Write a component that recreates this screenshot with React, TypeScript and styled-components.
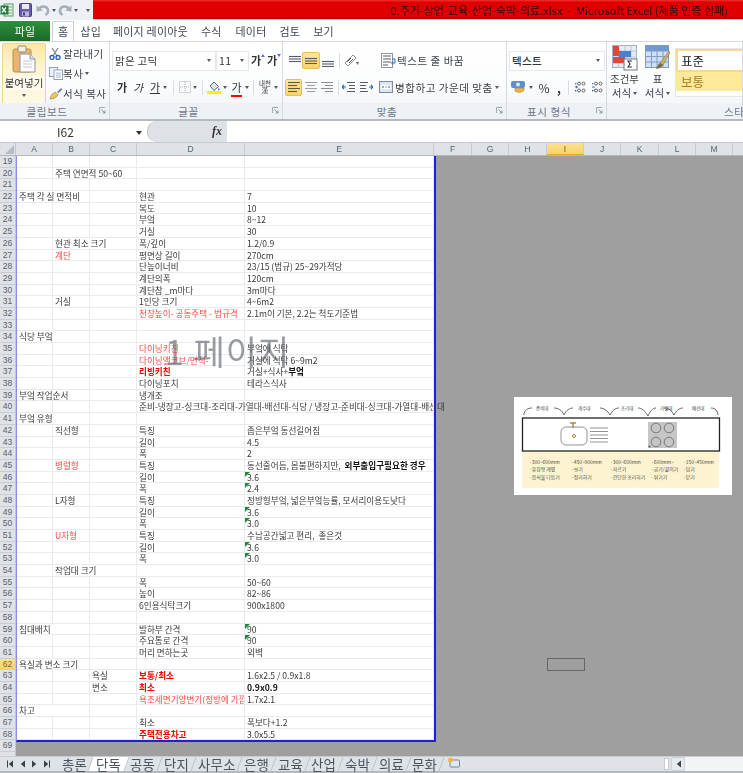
import React from "react";
import styled, { createGlobalStyle } from "styled-components";

const Global = createGlobalStyle`
  html, body { margin: 0; padding: 0; background: #fff; }
  * { box-sizing: border-box; }
  svg { display: block; flex: none; }
`;

const KR = `"Noto Sans CJK KR", "Noto Sans", sans-serif`;

const Screen = styled.div`
  width: 743px; height: 773px; overflow: hidden; display: flex; flex-direction: column;
  font-family: ${KR}; color: #3c4350; position: relative; filter: blur(0.4px);
`;

/* ---------- title bar ---------- */
const TitleBar = styled.div`display: flex; height: 20px; background: #edf0f5;`;
const Qat = styled.div`width: 93px; display: flex; align-items: center;`;
const QatGap = styled.span<{ $w: number }>`width: ${p => p.$w}px; flex: none;`;
const TitleStrip = styled.div`
  flex: 1; height: 20px; display: flex; justify-content: flex-end; align-items: center; padding-right: 15px;
  background: linear-gradient(#f03030 0, #e00000 12%, #de0000 85%, #b80000 100%);
  font-size: 11px; color: #2c0303; white-space: pre; border-bottom: 1px solid #c9ced6;
`;

/* ---------- tabs ---------- */
const TabRow = styled.div`height: 21px; display: flex; align-items: flex-end; background: #fff; font-size: 11px; letter-spacing: .2px;`;
const FileTab = styled.div`
  width: 50px; height: 20px; background: linear-gradient(#2f8f3c, #1a6a28); color: #f4fff4; display: flex;
  align-items: center; justify-content: center; font-size: 11px;
`;
const RibbonTab = styled.div<{ $ml: number; $active?: boolean }>`
  margin-left: ${p => p.$ml}px; height: 20px; display: flex; align-items: center; justify-content: center;
  white-space: nowrap; color: #3e4858; padding: 0 ${p => (p.$active ? 5 : 0)}px 1px;
  ${p => p.$active && `background:#fff;border:1px solid #ccd1d8;border-bottom:none;`}
`;

/* ---------- ribbon ---------- */
const Ribbon = styled.div`
  height: 80px; display: flex; background: linear-gradient(#fff 0%, #fbfcfd 55%, #eef1f5 100%);
  border-top: 1px solid #d6dae0; border-bottom: 2px solid #b4b9bf; overflow: hidden;
`;
const Group = styled.div<{ $w: number }>`
  width: ${p => p.$w}px; flex: none; display: flex; flex-direction: column; border-right: 1px solid #d6dae0; position: relative;
`;
const GroupBody = styled.div`flex: 1; display: flex; min-height: 0;`;
const GroupLabel = styled.div<{ $pl?: number }>`
  height: 16px; font-size: 10.5px; color: #6f7785; display: flex; align-items: center; justify-content: ${p => (p.$pl ? "flex-start" : "center")};
  padding: 1px ${p => (p.$pl ? 0 : 15)}px 0 ${p => p.$pl || 0}px; white-space: nowrap; letter-spacing: .6px; position: relative; background: #eef1f5;
`;
const Launcher = styled.span`position: absolute; right: 3px; top: 4px;`;

const PasteBtn = styled.div`
  width: 44px; height: 63px; margin: 1px 0 0 2px; border: 1px solid #ecd58f; border-radius: 2px; display: flex;
  flex-direction: column; align-items: center; background: linear-gradient(#fde7a6, #fff6d6 45%, #fff8e4);
  font-size: 10.5px; white-space: nowrap; color: #333; padding-top: 1px;
`;
const PasteText = styled.span`margin-top: 3px; line-height: 14px; background: #fffbee; width: 100%; text-align: center;`;
const SmallCol = styled.div`display: flex; flex-direction: column; gap: 3px; padding: 3px 0 0 3px;`;
const SmallBtn = styled.div`display: flex; align-items: center; height: 17px; font-size: 10.5px; white-space: nowrap; color: #3a3f48; letter-spacing: .5px;`;
const SmallIcon = styled.span`width: 14px; flex: none; display: flex;`;

const StackCol = styled.div`display: flex; flex-direction: column; flex: 1; padding-top: 5px;`;
const Line = styled.div<{ $h: number; $pl?: number; $gap?: number }>`
  height: ${p => p.$h}px; display: flex; align-items: center; padding-left: ${p => p.$pl || 0}px; gap: ${p => p.$gap || 0}px; flex: none;
`;
const Combo = styled.div<{ $w: number; $bold?: boolean }>`
  width: ${p => p.$w}px; height: 20px; background: #fff; border: 1px solid #e4e7eb; display: flex; align-items: center;
  justify-content: space-between; padding: 0 4px 0 2px; font-size: 10.5px; color: #333; font-weight: ${p => (p.$bold ? 500 : 400)}; flex: none; white-space: pre; letter-spacing: .3px;
`;
const Caret = styled.span<{ $ml?: number }>`
  width: 0; height: 0; border: 2px solid transparent; border-top: 3px solid #556; border-bottom: none; margin-left: ${p => p.$ml ?? 2}px; flex: none;
`;
const Glyph = styled.span<{ $w: number; $bold?: boolean; $italic?: boolean; $under?: boolean; $size?: number; $ml?: number; $lh?: number }>`
  width: ${p => p.$w}px; margin-left: ${p => p.$ml || 0}px; text-align: center; font-size: ${p => p.$size || 11}px; flex: none; color: #333; line-height: ${p => p.$lh || 13}px;
  font-weight: ${p => (p.$bold ? 700 : 400)}; font-style: ${p => (p.$italic ? "italic" : "normal")};
  text-decoration: ${p => (p.$under ? "underline" : "none")};
`;
const RedUnder = styled.span`border-bottom: 2.5px solid #f00;`;
const Gap = styled.span<{ $w: number }>`width: ${p => p.$w}px; flex: none;`;
const Sep = styled.span<{ $ml: number; $mr: number }>`width: 1px; height: 15px; background: #d9dde2; margin: 0 ${p => p.$mr}px 0 ${p => p.$ml}px; flex: none;`;
const Active = styled.span<{ $w: number; $h: number; $ml?: number }>`
  width: ${p => p.$w}px; height: ${p => p.$h}px; margin-left: ${p => p.$ml || 0}px; background: linear-gradient(#fde59c, #fbd36f);
  border: 1px solid #e7bd62; border-radius: 2px; display: flex; align-items: center; justify-content: center; flex: none;
`;
const Plain = styled.span<{ $w: number; $ml?: number }>`width: ${p => p.$w}px; margin-left: ${p => p.$ml || 0}px; display: flex; justify-content: center; flex: none;`;
const RibText = styled.span<{ $ml?: number }>`font-size: 10.5px; color: #3a3f48; white-space: nowrap; margin-left: ${p => p.$ml || 0}px; letter-spacing: .55px;`;

const BigBtn = styled.div<{ $w: number }>`
  width: ${p => p.$w}px; flex: none; display: flex; flex-direction: column; align-items: center; font-size: 10.5px; color: #3a3f48; padding-top: 3px; white-space: nowrap;
`;
const BigText = styled.div`height: 14px; line-height: 14px; display: flex; align-items: center;`;
const BigFirst = styled(BigText)`margin-top: 1px;`;
const Gallery = styled.div`flex: 1; margin: 6px 0 0 2px; height: 49px; background: #fff; border: 1px solid #e3e6ea; border-right: none; display: flex; flex-direction: column;`;
const StyleNormal = styled.div`
  height: 23px; border: 2px solid #f6d98a; background: #fff; font-size: 12.5px; color: #222; display: flex; align-items: center; padding-left: 3px; border-right: none;
`;
const StyleNeutral = styled.div`height: 19px; background: #fde99c; color: #a57c1c; font-size: 12.5px; display: flex; align-items: center; padding-left: 5px;`;

/* ---------- formula bar ---------- */
const FormulaBar = styled.div`height: 22px; display: flex; background: #fff; border-bottom: 1px solid #c4c9d0;`;
const NameBox = styled.div`
  width: 147px; flex: none; font-size: 12px; color: #333; display: flex; align-items: center; position: relative; padding-left: 57px;
`;
const NameCaret = styled.span`
  position: absolute; left: 136px; top: 10px; width: 0; height: 0; border: 3px solid transparent; border-top: 4px solid #333; border-bottom: none;
`;
const FxBox = styled.div`
  width: 80px; flex: none; background: #dee2e7; border-radius: 10px 0 0 10px; display: flex; align-items: center; justify-content: flex-end;
  padding-right: 5px; font: italic 700 12px "Liberation Serif", serif; color: #333; border-left: 1px solid #b9bec6;
`;

/* ---------- column headers ---------- */
const ColHeadRow = styled.div`height: 13px; display: flex; background: #dfe3e8; border-bottom: 1px solid #b4b8be; overflow: hidden;`;
const Corner = styled.div`width: 16px; flex: none; border-right: 1px solid #c3c8ce; position: relative; overflow: hidden;`;
const CornerMark = styled.span`position: absolute; right: 1px; bottom: 1px; width: 0; height: 0; border-left: 9px solid transparent; border-bottom: 9px solid #b7bcc3;`;
const ColHead = styled.div<{ $w: number; $sel?: boolean }>`
  width: ${p => p.$w}px; flex: none; text-align: center; font: 8.5px/12px "Liberation Sans", sans-serif; color: #59616e;
  border-right: 1px solid #c8ccd2; ${p => p.$sel && `background:linear-gradient(#fde28c,#f9d26a);border-bottom:1px solid #e0a93d;color:#6a5a30;`}
`;

/* ---------- sheet ---------- */
const SheetArea = styled.div`flex: 1; display: flex; background: #9f9f9f; position: relative; overflow: hidden;`;
const RowHeads = styled.div`width: 16px; flex: none; background: #dfe3e8; display: grid; grid-auto-rows: 11.69px; border-right: 1px solid #c3c8ce;`;
const RowHead = styled.div<{ $sel?: boolean }>`
  text-align: center; font: 8.5px/11.5px "Liberation Sans", sans-serif; color: #59616e; border-bottom: 1px solid #c9cdd3;
  ${p => p.$sel && `background:linear-gradient(#fde28c,#f9d26a);color:#7a6a30;`}
`;
const Page = styled.div`
  width: 420px; height: 586px; flex: none; background: #fff; border-left: 1px solid #8d8de6; border-right: 2px solid #1f1fd8; border-bottom: 2px solid #1f1fd8;
  display: grid; grid-template-columns: 36px 37px 47px 108px 189px; grid-auto-rows: 11.69px; font-size: 8.6px; color: #3a3a3a; position: relative;
`;
const Cell = styled.div<{ $open?: boolean; $clip?: boolean; $tone?: string; $flag?: boolean }>`
  border-right: ${p => (p.$open ? "none" : "1px solid #e9ebee")}; border-bottom: 1px solid #e9ebee; padding-left: 2px; white-space: pre; line-height: 11.5px; position: relative;
  overflow: ${p => (p.$clip ? "hidden" : "visible")}; min-width: 0;
  color: ${p => (p.$tone === "red" ? "#ff4545" : p.$tone === "strong" ? "#f00000" : p.$tone === "bold" ? "#111" : "#3a3a3a")};
  font-weight: ${p => (p.$tone === "strong" || p.$tone === "bold" ? 700 : 400)};
  ${p => p.$flag && `&::before{content:"";position:absolute;left:0;top:0;border-top:5px solid #1f8a3a;border-right:5px solid transparent;}`}
`;
const BoldPart = styled.b`color: #111; font-weight: 700;`;
const Watermark = styled.div`
  position: absolute; left: 165px; top: 171px; font-size: 34px; line-height: 48px; letter-spacing: 1px; color: rgba(90, 96, 106, .62); white-space: pre; pointer-events: none;
`;
const Selection = styled.div`position: absolute; left: 547px; top: 502px; width: 38px; height: 13px; border: 1.5px solid #676767;`;
const Picture = styled.div`position: absolute; left: 514px; top: 241px; width: 218px; height: 98px;`;

/* ---------- sheet tabs ---------- */
const SheetBar = styled.div`height: 17px; display: flex; background: #dfe3e8; border-top: 1px solid #c9cdd3; border-bottom: 2px solid #b4b9bf; align-items: stretch; font-size: 13.4px;`;
const NavBox = styled.div`width: 56px; flex: none; display: flex; align-items: center; justify-content: space-around; padding: 0 3px 0 4px;`;
const SheetTab = styled.div<{ $active?: boolean; $w: number }>`
  width: ${p => p.$w}px; flex: none; display: flex; align-items: center; justify-content: center; white-space: nowrap; color: #4c535f;
  background: ${p => (p.$active ? "#fff" : "transparent")}; letter-spacing: .3px; line-height: 14px;
  border-right: 1px solid #bfc4cb; transform: skewX(-20deg);
`;
const SheetLabel = styled.span`transform: skewX(20deg);`;
const TabFill = styled.div`flex: 1;`;
const Splitter = styled.div`width: 5px; margin: 1px 2px 1px 0; background: #fff; border: 1px solid #c8ccd2; flex: none;`;
const ScrollLeft = styled.div`width: 14px; flex: none; display: flex; align-items: center; justify-content: center; background: #e6e9ee; border: 1px solid #cfd3d9; border-radius: 2px;`;
const ScrollTrack = styled.div`width: 58px; flex: none; background: #f2f4f7;`;

/* ---------- icons ---------- */
const ExcelLogo = () => (
  <svg width="14" height="14" viewBox="0 0 14 14"><rect x="4" y="1" width="9" height="12" fill="#e5f2e5" stroke="#5b9a68" /><path d="M6 4h6M6 7h6M6 10h6" stroke="#78ad82" /><rect x="0.5" y="2.5" width="8" height="9" fill="#1f7c3a" /><path d="M2 4.5l4 5M6 4.5l-4 5" stroke="#fff" strokeWidth="1.3" /></svg>
);
const SaveIcon = () => (
  <svg width="13" height="14" viewBox="0 0 13 14"><rect x=".5" y=".5" width="12" height="13" rx="1" fill="#6a5aa8" stroke="#4a3f84" /><rect x="3" y="1" width="7" height="5" fill="#e8eaf2" /><rect x="3" y="8.5" width="7" height="5" fill="#b9b5d8" /><rect x="4" y="9.5" width="2" height="3" fill="#4a3f84" /></svg>
);
const UndoIcon = ({ flip }: { flip?: boolean }) => (
  <svg width="14" height="14" viewBox="0 0 14 14" style={{ transform: flip ? "scaleX(-1)" : undefined }}><path d="M3 6C5 2.5 11 2.5 12 7c.4 2-1 4-2.5 5" fill="none" stroke="#a9aeb6" strokeWidth="2.6" /><path d="M0.5 2.5L7 7.5 0.5 8.5z" fill="#a9aeb6" /></svg>
);
const PasteIcon = () => (
  <svg width="24" height="28" viewBox="0 0 24 28"><rect x="1" y="4" width="18" height="23" rx="2" fill="#e9b46f" stroke="#c08a48" /><rect x="6" y="1" width="8" height="6" rx="1" fill="#f1efe6" stroke="#8f8a7a" /><path d="M8 9h10l5 5v13H8z" fill="#fdfdff" stroke="#8a94a6" /><path d="M18 9v5h5" fill="#dfe6f2" stroke="#8a94a6" /><path d="M11 16h9M11 19h9M11 22h9" stroke="#c2cbd8" /></svg>
);
const CutIcon = () => (
  <svg width="12" height="13" viewBox="0 0 12 13"><path d="M3 1l5 8M9 1L4 9" stroke="#7d8794" strokeWidth="1.3" /><circle cx="3" cy="10.5" r="2" fill="none" stroke="#2f5fb0" strokeWidth="1.4" /><circle cx="9" cy="10.5" r="2" fill="none" stroke="#2f5fb0" strokeWidth="1.4" /></svg>
);
const CopyIcon = () => (
  <svg width="14" height="13" viewBox="0 0 14 13"><rect x=".5" y=".5" width="8" height="9" fill="#eef3fa" stroke="#8aa0bf" /><rect x="5" y="3" width="8.5" height="9.5" fill="#fff" stroke="#8aa0bf" /><path d="M7 6h5M7 8h5M7 10h5" stroke="#a7b8cf" /></svg>
);
const BrushIcon = () => (
  <svg width="14" height="13" viewBox="0 0 14 13"><path d="M1 12c1-4 3-6 5-7l3 3c-1 2-4 4-8 4z" fill="#f0c659" stroke="#a98835" strokeWidth=".7" /><path d="M8 5l4-4 1.4 1.4-4 4z" fill="#7f8794" /></svg>
);
const Launch = () => (
  <svg width="7" height="7" viewBox="0 0 7 7"><path d="M.5 6V.5H6" fill="none" stroke="#a3a9b2" /><path d="M2.5 2.5L6 6M6 3.5V6H3.5" fill="none" stroke="#8d949e" /></svg>
);
const GrowFont = ({ down }: { down?: boolean }) => (
  <svg width="4" height="3" viewBox="0 0 4 3" style={{ alignSelf: "flex-start", marginTop: 7 }}><path d={down ? "M0 0h4L2 3z" : "M2 0l2 3H0z"} fill="#4a7fc4" /></svg>
);
const BorderIcon = () => (
  <svg width="12" height="12" viewBox="0 0 12 12"><rect x=".5" y=".5" width="11" height="11" fill="none" stroke="#aab0b8" strokeDasharray="1 1" /><path d="M6 1v10M1 6h10" stroke="#aab0b8" strokeDasharray="1 1" /></svg>
);
const FillIcon = () => (
  <svg width="14" height="13" viewBox="0 0 14 13"><path d="M3 5l4-4 4.5 4.5L7 9.5z" fill="#dfe6f0" stroke="#59677c" /><path d="M11.5 6.5c1 1.4 1.5 2 1 2.6s-1.500.2-1.400-.6z" fill="#3d6fb4" /><rect x="0" y="10" width="14" height="3" fill="#ffee00" /></svg>
);
const Lines = ({ kind, color = "#6d737c" }: { kind: "l" | "c" | "r"; color?: string }) => {
  const short = kind === "l" ? [1, 10] : kind === "c" ? [3, 11] : [5, 13];
  return (
    <svg width="14" height="12" viewBox="0 0 14 12">
      {[1.5, 4.5, 7.5, 10.5].map((y, i) => (
        <path key={y} d={`M${i % 2 ? short[0] : 1} ${y}H${i % 2 ? short[1] : 13}`} stroke={color} strokeWidth="1.1" />
      ))}
    </svg>
  );
};
const VAlign = ({ at }: { at: number }) => (
  <svg width="14" height="12" viewBox="0 0 14 12">
    {[0, 2.5, 5].map(o => <path key={o} d={`M1 ${at + o + .5}H13`} stroke="#555b64" strokeWidth="1.1" />)}
  </svg>
);
const Orient = () => (
  <svg width="17" height="13" viewBox="0 0 17 13"><path d="M2 9L10 1l3 3-8 8z" fill="#fff" stroke="#8b919b" /><path d="M4 8l4-4M6 9l4-4" stroke="#555" /><path d="M13 8h3l-1.500 3z" fill="#666" /></svg>
);
const Indent = ({ flip }: { flip?: boolean }) => (
  <svg width="14" height="12" viewBox="0 0 14 12" style={{ transform: flip ? "scaleX(-1)" : undefined }}><path d="M5 1.500h8M7 4.500h6M7 7.500h6M5 10.500h8" stroke="#555b64" /><path d="M4 6H0M2 4L0 6l2 2" fill="none" stroke="#2d67bd" strokeWidth="1.2" /></svg>
);
const WrapIcon = () => (
  <svg width="15" height="15" viewBox="0 0 15 15"><rect x=".5" y=".5" width="11" height="14" fill="#fff" stroke="#8f96a0" /><path d="M2 3h8M2 6h8M2 9h8M2 12h5" stroke="#555b64" /><path d="M11 6h3v4h-3M12 8.500l-1.500 1.500 1.500 1.500" fill="none" stroke="#2d67bd" /></svg>
);
const MergeIcon = () => (
  <svg width="14" height="12" viewBox="0 0 14 12"><rect x=".5" y=".5" width="13" height="11" fill="#dce6f4" stroke="#7e8a9c" /><rect x="2" y="4" width="10" height="4" fill="#fff" /><path d="M3 6h2M9 6h2" stroke="#1f5fb5" /><path d="M6.500 6h1" stroke="#333" /></svg>
);
const CurrencyIcon = () => (
  <svg width="15" height="14" viewBox="0 0 15 14"><rect x="0" y="1" width="14" height="7" rx="2" fill="#5d8fd0" /><circle cx="7" cy="4.500" r="2" fill="#dbe8f8" /><path d="M4 8h9v2c-1 3-7 3-9 1z" fill="#e8b345" stroke="#b5852a" strokeWidth=".6" /></svg>
);
const DecimalIcon = ({ more }: { more?: boolean }) => (
  <svg width="13" height="13" viewBox="0 0 13 13"><rect x="1" y="2" width="1.300" height="1.300" fill="#3d6fb4" /><circle cx="5" cy="2.600" r="1.500" fill="none" stroke="#444" strokeWidth=".8" /><circle cx="9.500" cy="2.600" r="1.500" fill="none" stroke="#444" strokeWidth=".8" /><rect x="1" y="9" width="1.300" height="1.300" fill="#444" /><circle cx="5" cy="9.500" r="1.500" fill="none" stroke="#444" strokeWidth=".8" /><circle cx="9.500" cy="9.500" r="1.500" fill="none" stroke="#444" strokeWidth=".8" /><path d={more ? "M1 6h3M2.500 4.800v2.400" : "M1 6h3"} stroke="#3d6fb4" /></svg>
);
const CondIcon = () => (
  <svg width="26" height="26" viewBox="0 0 26 26">
    <rect x=".5" y=".5" width="24" height="22" fill="#e7edf6" stroke="#9fb0c8" />
    <path d="M.5 6h24M.5 12h24M.5 18h24M6.500.5v22M13 .5v22M19 .5v22" stroke="#b8c6da" />
    <rect x="1" y="1" width="6" height="10" fill="#e5443c" /><rect x="7" y="6" width="12" height="6" fill="#4a7fd0" /><rect x="1" y="12" width="12" height="6" fill="#e5443c" />
    <rect x="12" y="14" width="13" height="11" fill="#fff" stroke="#6e7886" /><path d="M20 16h-4l2 3-2 3h4" fill="none" stroke="#333" strokeWidth="1.100" />
  </svg>
);
const TableIcon = () => (
  <svg width="26" height="26" viewBox="0 0 26 26">
    <rect x=".5" y=".5" width="23" height="22" fill="#cfe0f6" stroke="#7f9cc4" />
    <rect x="1" y="1" width="22" height="5" fill="#6f97d2" />
    <path d="M.5 6h23M.5 11.500h23M.5 17h23M6.500.5v22M12 .5v22M18 .5v22" stroke="#7f9cc4" />
    <path d="M24 6L15 18l3 2 7-12z" fill="#c9b06d" stroke="#8b7740" strokeWidth=".6" /><path d="M15 18c-2 1-3 4-4 6 3-.5 6-1.500 7-4z" fill="#7d6b3e" />
  </svg>
);
const NavIcon = ({ dir, end }: { dir: "l" | "r"; end?: boolean }) => (
  <svg width="7" height="8" viewBox="0 0 7 8" style={{ transform: dir === "r" ? "scaleX(-1)" : undefined }}>
    <path d="M6 0.500v7L1.800 4z" fill="#3b4048" />{end && <rect x="0" y=".5" width="1" height="7" fill="#3b4048" />}
  </svg>
);
const NewSheet = () => (
  <svg width="13" height="12" viewBox="0 0 13 12"><rect x="3" y="3" width="9.500" height="7" rx="1" fill="#dfe9f6" stroke="#6f86a8" /><circle cx="3.500" cy="3" r="2.500" fill="#f2b93f" /></svg>
);

/* ---------- floating picture drawing ---------- */
const kitchenCols = [
  { x: 15, lines: ["·300~600mm", "·유창형 개별", "·음식물 다듬기"] },
  { x: 57, lines: ["·450~900mm", "·씻기", "·정리하기"] },
  { x: 96, lines: ["·300~600mm", "·자르기", "·간단한 조리하기"] },
  { x: 137, lines: ["·600mm~", "·굽기/끓이기", "·튀기기"] },
  { x: 169, lines: ["·150~450mm", "·담기", "·닫기"] },
];
const PictureArt = () => (
  <svg width="218" height="98" viewBox="0 0 218 98" fontFamily={KR}>
    <rect width="218" height="98" fill="#fff" />
    <rect x="8" y="54" width="197" height="37" fill="#fdf3d0" />
    <rect x="8.500" y="21" width="197" height="33" fill="#fff" stroke="#222" strokeWidth="1.300" />
    <path d="M10 18c0-5 4-7 8-7M40 11c4 0 8 2 10 7 2-5 6-7 9-7M86 11c4 0 8 3 10 7 2-4 5-7 9-7M124 11c4 0 7 3 10 8 2-5 5-8 8-8M150 11c5 0 8 3 10 7 2-4 5-7 9-7M197 11c4 0 7 3 7 7" fill="none" stroke="#444" strokeWidth=".8" />
    {([["준비대", 22], ["개수대", 64], ["조리대", 107], ["가열대", 146], ["배선대", 178]] as [string, number][]).map(([t, x]) => <text key={t} x={x} y="13" fontSize="4.500" fill="#444">{t}</text>)}
    <rect x="47" y="30" width="26" height="18" rx="5" fill="#fff" stroke="#777" strokeWidth=".8" />
    <circle cx="60" cy="39" r="1.500" fill="none" stroke="#a08a3c" />
    <path d="M56 26h6M59 26v5" stroke="#a38c50" strokeWidth="1.500" />
    <path d="M76 31h18M76 34.500h18M76 38h18M76 41.500h18M76 45h18" stroke="#777" strokeWidth=".8" />
    <rect x="134" y="25" width="29" height="26" fill="#c6c6c6" />
    {[[142, 31], [155, 31], [142, 45], [155, 45]].map(([x, y]) => <circle key={`${x}-${y}`} cx={x} cy={y} r="4.800" fill="none" stroke="#666" strokeWidth=".8" />)}
    <circle cx="135.500" cy="49.500" r="1" fill="#555" />
    {kitchenCols.map(c => c.lines.map((l, i) => <text key={l} x={c.x} y={66.500 + i * 7.700} fontSize="4.900" fill="#4a4a4a">{l}</text>))}
  </svg>
);

/* ---------- data ---------- */
type C = { t: React.ReactNode; tone?: string; open?: boolean; clip?: boolean; flag?: boolean };
type R = Partial<Record<"A" | "B" | "C" | "D" | "E", C>>;
const n = (t: React.ReactNode): C => ({ t });
const o = (t: string): C => ({ t, open: true });
const red = (t: string): C => ({ t, tone: "red" });
const st = (t: string): C => ({ t, tone: "strong" });
const fl = (t: string): C => ({ t, flag: true });
const m = (d: string, e?: string | C): R => ({ D: n(d), E: typeof e === "string" ? n(e) : e });

const DATA: Record<number, R> = {
  20: { B: o("주택 연면적 50~60") },
  22: { A: o("주택 각 실 면적비"), ...m("현관", "7") },
  23: m("복도", "10"), 24: m("부엌", "8~12"), 25: m("거실", "30"),
  26: { B: o("현관 최소 크기"), ...m("폭/깊이", "1.2/0.9") },
  27: { B: red("계단"), ...m("평면상 길이", "270cm") },
  28: m("단높이너비", "23/15 (법규) 25~29가적당"), 29: m("계단의폭", "120cm"), 30: m("계단참 _m마다", "3m마다"),
  31: { B: n("거실"), ...m("1인당 크기", "4~6m2") },
  32: { D: red("천장높이- 공동주택 - 법규격"), E: n("2.1m이 기본, 2.2는 척도기준법") },
  34: { A: o("식당 부엌") },
  35: { D: red("다이닝키친"), E: n("부엌에 식탁") },
  36: { D: red("다이닝앨코브/면적-"), E: n("거실에 식탁 6~9m2") },
  37: { D: st("리빙키친"), E: n(<>거실+식사+<BoldPart>부엌</BoldPart></>) },
  38: m("다이닝포치", "테라스식사"),
  39: { A: o("부엌 작업순서"), D: n("냉개조") },
  40: { D: { t: "준비-냉장고-싱크대-조리대-가열대-배선대-식당 / 냉장고-준비대-싱크대-가열대-배선대", open: true } },
  41: { A: o("부엌 유형") },
  42: { B: n("직선형"), ...m("특징", "좁은부엌 동선길어짐") },
  43: m("길이", "4.5"), 44: m("폭", "2"),
  45: { B: red("병렬형"), D: n("특징"), E: n(<>동선줄어듬, 몸불편하지만,  <BoldPart>외부출입구필요한 경우</BoldPart></>) },
  46: m("길이", fl("3.6")), 47: m("폭", fl("2.4")),
  48: { B: n("L자형"), ...m("특징", "정방형부엌, 넓은부엌능률, 모서리이용도낮다") },
  49: m("길이", fl("3.6")), 50: m("폭", fl("3.0")),
  51: { B: red("U자형"), ...m("특징", "수납공간넓고 편리,  좋은것") },
  52: m("길이", fl("3.6")), 53: m("폭", fl("3.0")),
  54: { B: o("작업대 크기") },
  55: m("폭", "50~60"), 56: m("높이", "82~86"), 57: m("6인용식탁크기", "900x1800"),
  59: { A: o("침대배치"), ...m("발하부 간격", fl("90")) },
  60: m("주요통로 간격", fl("90")), 61: m("머리 면하는곳", "외벽"),
  62: { A: o("욕실과 변소 크기") },
  63: { C: n("욕실"), D: st("보통/최소"), E: n("1.6x2.5 / 0.9x1.8") },
  64: { C: n("변소"), D: st("최소"), E: { t: "0.9x0.9", tone: "bold" } },
  65: { D: { t: "욕조세면기양변기(정방에 가깝", tone: "red", clip: true }, E: n("1.7x2.1") },
  66: { A: o("차고") },
  67: m("최소", "폭보다+1.2"),
  68: { D: st("주택전용차고"), E: n("3.0x5.5") },
};

const COLS: [string, number][] = [["A", 37], ["B", 37], ["C", 47], ["D", 108], ["E", 189], ["F", 38], ["G", 37], ["H", 38], ["I", 37], ["J", 37], ["K", 38], ["L", 37], ["M", 37], ["N", 40]];
const ROWS = Array.from({ length: 50 }, (_, i) => i + 19);
const KEYS = ["A", "B", "C", "D", "E"] as const;
const TABS: [string, number][] = [["총론", 32], ["단독", 36], ["공동", 33], ["단지", 34], ["사무소", 46], ["은행", 34], ["교육", 34], ["산업", 33], ["숙박", 34], ["의료", 34], ["문화", 33]];

export default function App() {
  return (
    <Screen>
      <Global />
      <TitleBar>
        <Qat>
          <ExcelLogo /><QatGap $w={5} /><SaveIcon /><QatGap $w={4} /><UndoIcon /><QatGap $w={2} /><Caret $ml={0} /><QatGap $w={2} /><UndoIcon flip /><QatGap $w={2} /><Caret $ml={0} /><QatGap $w={8} /><Caret $ml={0} />
        </Qat>
        <TitleStrip>0.주거-상업-교육-산업-숙박-의료.xlsx  -  Microsoft Excel (제품 인증 실패)</TitleStrip>
      </TitleBar>

      <TabRow>
        <FileTab>파일</FileTab>
        <RibbonTab $ml={2} $active>홈</RibbonTab>
        <RibbonTab $ml={6}>삽입</RibbonTab>
        <RibbonTab $ml={12}>페이지 레이아웃</RibbonTab>
        <RibbonTab $ml={13}>수식</RibbonTab>
        <RibbonTab $ml={14}>데이터</RibbonTab>
        <RibbonTab $ml={13}>검토</RibbonTab>
        <RibbonTab $ml={13}>보기</RibbonTab>
      </TabRow>

      <Ribbon>
        <Group $w={110}>
          <GroupBody>
            <PasteBtn>
              <PasteIcon />
              <PasteText>붙여넣기</PasteText>
              <Caret $ml={0} style={{ marginTop: 4 }} />
            </PasteBtn>
            <SmallCol>
              <SmallBtn><SmallIcon><CutIcon /></SmallIcon>잘라내기</SmallBtn>
              <SmallBtn><SmallIcon><CopyIcon /></SmallIcon>복사<Caret /></SmallBtn>
              <SmallBtn><SmallIcon><BrushIcon /></SmallIcon>서식 복사</SmallBtn>
            </SmallCol>
          </GroupBody>
          <GroupLabel>클립보드<Launcher><Launch /></Launcher></GroupLabel>
        </Group>

        <Group $w={173}>
          <GroupBody>
            <StackCol>
              <Line $h={27} $pl={2}>
                <Combo $w={104}>맑은 고딕<Caret /></Combo>
                <Combo $w={33}>11<Caret /></Combo>
                <Glyph $w={10} $ml={2} $bold>가</Glyph><GrowFont />
                <Glyph $w={10} $ml={2} $bold>가</Glyph><GrowFont down />
              </Line>
              <Line $h={26} $pl={6}>
                <Glyph $w={12} $bold>가</Glyph>
                <Glyph $w={12} $ml={4} $italic>가</Glyph>
                <Glyph $w={12} $ml={5} $under>가</Glyph><Caret />
                <Sep $ml={6} $mr={5} />
                <BorderIcon /><Caret />
                <Sep $ml={5} $mr={4} />
                <FillIcon /><Caret />
                <Glyph $w={13} $ml={3}><RedUnder>가</RedUnder></Glyph><Caret />
                <Sep $ml={4} $mr={4} />
                <Glyph $w={14} $size={6.5} $lh={7}>내천<br />漢</Glyph><Caret />
              </Line>
            </StackCol>
          </GroupBody>
          <GroupLabel>글꼴<Launcher><Launch /></Launcher></GroupLabel>
        </Group>

        <Group $w={224}>
          <GroupBody>
            <StackCol>
              <Line $h={27} $pl={4}>
                <Plain $w={15}><VAlign at={1} /></Plain>
                <Active $w={18} $h={17} $ml={0}><VAlign at={3} /></Active>
                <Plain $w={14} $ml={1}><VAlign at={6} /></Plain>
                <Sep $ml={4} $mr={3} />
                <Orient /><Gap $w={21} /><WrapIcon />
                <RibText $ml={1}>텍스트 줄 바꿈</RibText>
              </Line>
              <Line $h={26} $pl={2}>
                <Active $w={17} $h={17}><Lines kind="l" color="#5f5a46" /></Active>
                <Plain $w={15} $ml={1}><Lines kind="c" color="#9aa0a8" /></Plain>
                <Plain $w={15} $ml={1}><Lines kind="r" color="#8a9099" /></Plain>
                <Sep $ml={4} $mr={3} />
                <Indent /><Gap $w={3} /><Indent flip /><Gap $w={6} /><MergeIcon />
                <RibText $ml={2}>병합하고 가운데 맞춤</RibText><Caret />
              </Line>
            </StackCol>
          </GroupBody>
          <GroupLabel>맞춤<Launcher><Launch /></Launcher></GroupLabel>
        </Group>

        <Group $w={100}>
          <GroupBody>
            <StackCol>
              <Line $h={27} $pl={2}><Combo $w={96} $bold>텍스트<Caret /></Combo></Line>
              <Line $h={26} $pl={4}>
                <CurrencyIcon /><Caret $ml={3} />
                <Glyph $w={12} $ml={5} $size={12}>%</Glyph>
                <Glyph $w={8} $ml={5} $bold $size={12}>,</Glyph>
                <Sep $ml={5} $mr={5} />
                <DecimalIcon more /><Gap $w={4} /><DecimalIcon />
              </Line>
            </StackCol>
          </GroupBody>
          <GroupLabel>표시 형식<Launcher><Launch /></Launcher></GroupLabel>
        </Group>

        <Group $w={136}>
          <GroupBody>
            <BigBtn $w={35}>
              <CondIcon />
              <BigFirst>조건부</BigFirst>
              <BigText>서식<Caret /></BigText>
            </BigBtn>
            <BigBtn $w={31}>
              <TableIcon />
              <BigFirst>표</BigFirst>
              <BigText>서식<Caret /></BigText>
            </BigBtn>
            <Gallery>
              <StyleNormal>표준</StyleNormal>
              <StyleNeutral>보통</StyleNeutral>
            </Gallery>
          </GroupBody>
          <GroupLabel $pl={117}>스타</GroupLabel>
        </Group>
      </Ribbon>

      <FormulaBar>
        <NameBox>I62<NameCaret /></NameBox>
        <FxBox>fx</FxBox>
      </FormulaBar>

      <ColHeadRow>
        <Corner><CornerMark /></Corner>
        {COLS.map(([c, w]) => <ColHead key={c} $w={w} $sel={c === "I"}>{c}</ColHead>)}
      </ColHeadRow>

      <SheetArea>
        <RowHeads>
          {[...ROWS, 69, 70].map(r => <RowHead key={r} $sel={r === 62}>{r === 70 ? "" : r}</RowHead>)}
        </RowHeads>
        <Page>
          {ROWS.map(r => KEYS.map(k => {
            const c = DATA[r]?.[k];
            return (
              <Cell key={`${r}${k}`} $open={c?.open} $clip={c?.clip} $tone={c?.tone} $flag={c?.flag}>{c?.t}</Cell>
            );
          }))}
        </Page>
        <Watermark>1 페이지</Watermark>
        <Picture><PictureArt /></Picture>
        <Selection />
      </SheetArea>

      <SheetBar>
        <NavBox>
          <NavIcon dir="l" end /><NavIcon dir="l" /><NavIcon dir="r" /><NavIcon dir="r" end />
        </NavBox>
        <Gap $w={3} />
        {TABS.map(([t, w]) => (
          <SheetTab key={t} $w={w} $active={t === "단독"}><SheetLabel>{t}</SheetLabel></SheetTab>
        ))}
        <Gap $w={5} />
        <NewSheet />
        <TabFill />
        <Splitter />
        <ScrollLeft><NavIcon dir="l" /></ScrollLeft>
        <ScrollTrack />
      </SheetBar>
    </Screen>
  );
}
